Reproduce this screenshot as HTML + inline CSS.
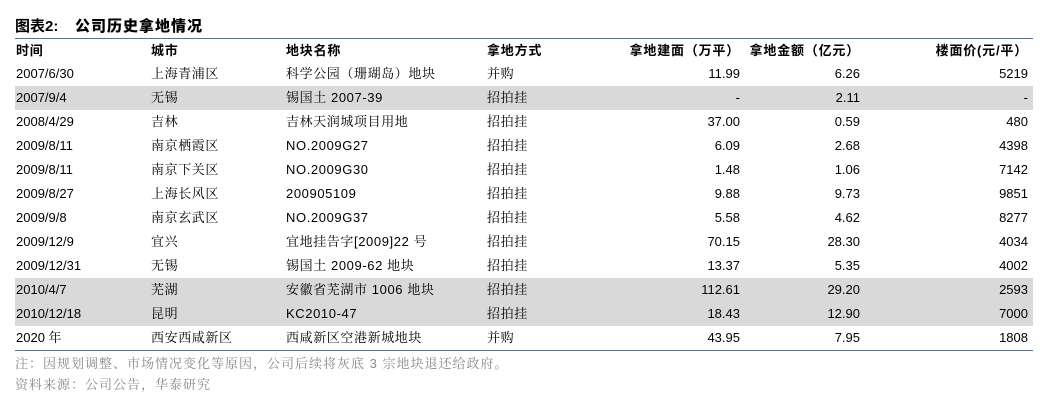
<!DOCTYPE html>
<html><head><meta charset="utf-8"><style>
body{margin:0;background:#fff;width:1062px;height:406px;overflow:hidden;font-family:"Liberation Sans","Noto Serif CJK SC",serif;font-size:13px;color:#000;position:relative}
.t{position:absolute;left:15px;top:15px;font-weight:bold;font-size:15px;font-family:"Liberation Sans","Noto Sans CJK SC",sans-serif}
.t b{letter-spacing:1px}
.line{position:absolute;left:15px;width:1018px;height:1px;background:#4a74ad}
.row{position:absolute;left:15px;width:1018px;height:24px;line-height:24px}
.g{background:#d9d9d9}
.row span{position:absolute;white-space:nowrap}
.c2,.c3,.c4{letter-spacing:0.6px}
.c1{left:1px}.c2{left:136px}.c3{left:271px}.c4{left:472px}
.r5{right:293px}.r6{right:173px}.r7{right:5px}
.h{font-weight:bold;font-family:"Liberation Sans","Noto Sans CJK SC",sans-serif}
.h span{letter-spacing:0.8px}
.n{position:absolute;left:15px;color:#888;font-size:13px;letter-spacing:1px}
</style></head><body>
<div class="t">图表2:&nbsp;&nbsp;&nbsp;&nbsp;<b>公司历史拿地情况</b></div>
<div class="line" style="top:38px"></div>
<div class="row h" style="top:39px;height:23px;line-height:23px"><span class="c1">时间</span><span class="c2">城市</span><span class="c3">地块名称</span><span class="c4">拿地方式</span><span class="r5">拿地建面（万平）</span><span class="r6">拿地金额（亿元）</span><span class="r7">楼面价(元/平）</span></div>
<div class="row" style="top:62px"><span class="c1">2007/6/30</span><span class="c2">上海青浦区</span><span class="c3">科学公园（珊瑚岛）地块</span><span class="c4">并购</span><span class="r5">11.99</span><span class="r6">6.26</span><span class="r7">5219</span></div>
<div class="row g" style="top:86px"><span class="c1">2007/9/4</span><span class="c2">无锡</span><span class="c3">锡国土 2007-39</span><span class="c4">招拍挂</span><span class="r5">-</span><span class="r6">2.11</span><span class="r7">-</span></div>
<div class="row" style="top:110px"><span class="c1">2008/4/29</span><span class="c2">吉林</span><span class="c3">吉林天润城项目用地</span><span class="c4">招拍挂</span><span class="r5">37.00</span><span class="r6">0.59</span><span class="r7">480</span></div>
<div class="row" style="top:134px"><span class="c1">2009/8/11</span><span class="c2">南京栖霞区</span><span class="c3">NO.2009G27</span><span class="c4">招拍挂</span><span class="r5">6.09</span><span class="r6">2.68</span><span class="r7">4398</span></div>
<div class="row" style="top:158px"><span class="c1">2009/8/11</span><span class="c2">南京下关区</span><span class="c3">NO.2009G30</span><span class="c4">招拍挂</span><span class="r5">1.48</span><span class="r6">1.06</span><span class="r7">7142</span></div>
<div class="row" style="top:182px"><span class="c1">2009/8/27</span><span class="c2">上海长风区</span><span class="c3">200905109</span><span class="c4">招拍挂</span><span class="r5">9.88</span><span class="r6">9.73</span><span class="r7">9851</span></div>
<div class="row" style="top:206px"><span class="c1">2009/9/8</span><span class="c2">南京玄武区</span><span class="c3">NO.2009G37</span><span class="c4">招拍挂</span><span class="r5">5.58</span><span class="r6">4.62</span><span class="r7">8277</span></div>
<div class="row" style="top:230px"><span class="c1">2009/12/9</span><span class="c2">宜兴</span><span class="c3">宜地挂告字[2009]22 号</span><span class="c4">招拍挂</span><span class="r5">70.15</span><span class="r6">28.30</span><span class="r7">4034</span></div>
<div class="row" style="top:254px"><span class="c1">2009/12/31</span><span class="c2">无锡</span><span class="c3">锡国土 2009-62 地块</span><span class="c4">招拍挂</span><span class="r5">13.37</span><span class="r6">5.35</span><span class="r7">4002</span></div>
<div class="row g" style="top:278px"><span class="c1">2010/4/7</span><span class="c2">芜湖</span><span class="c3">安徽省芜湖市 1006 地块</span><span class="c4">招拍挂</span><span class="r5">112.61</span><span class="r6">29.20</span><span class="r7">2593</span></div>
<div class="row g" style="top:302px"><span class="c1">2010/12/18</span><span class="c2">昆明</span><span class="c3">KC2010-47</span><span class="c4">招拍挂</span><span class="r5">18.43</span><span class="r6">12.90</span><span class="r7">7000</span></div>
<div class="row" style="top:326px"><span class="c1">2020 年</span><span class="c2">西安西咸新区</span><span class="c3">西咸新区空港新城地块</span><span class="c4">并购</span><span class="r5">43.95</span><span class="r6">7.95</span><span class="r7">1808</span></div>
<div class="line" style="top:350px"></div>
<div class="n" style="top:353px">注：因规划调整、市场情况变化等原因，公司后续将灰底 3 宗地块退还给政府。</div>
<div class="n" style="top:374px">资料来源：公司公告，华泰研究</div>
</body></html>
